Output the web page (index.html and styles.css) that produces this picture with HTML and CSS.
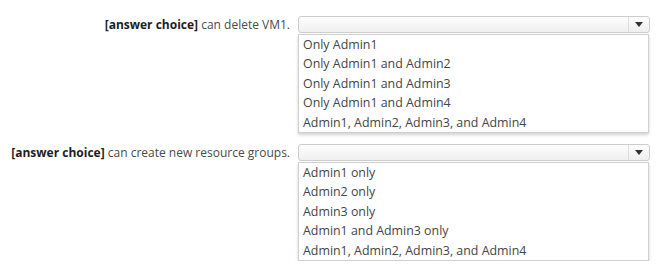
FILE: index.html
```html
<!DOCTYPE html>
<html lang="en">
<head>
    <meta charset="UTF-8">
    <title>Answer choices</title>
    <link rel="stylesheet" href="styles.css">
</head>
<body>
    <div class="sheet">
        <!-- question 1 -->
        <div class="question">
            <div class="prompt"><b>[answer choice]</b> can delete VM1.</div>
            <div class="dropdown">
                <div class="select">
                    <span class="value"></span>
                    <span class="caret"></span>
                </div>
                <ul class="options">
                    <li>Only Admin1</li>
                    <li>Only Admin1 and Admin2</li>
                    <li>Only Admin1 and Admin3</li>
                    <li>Only Admin1 and Admin4</li>
                    <li>Admin1, Admin2, Admin3, and Admin4</li>
                </ul>
            </div>
        </div>

        <!-- question 2 -->
        <div class="question">
            <div class="prompt"><b>[answer choice]</b> can create new resource groups.</div>
            <div class="dropdown">
                <div class="select">
                    <span class="value"></span>
                    <span class="caret"></span>
                </div>
                <ul class="options">
                    <li>Admin1 only</li>
                    <li>Admin2 only</li>
                    <li>Admin3 only</li>
                    <li>Admin1 and Admin3 only</li>
                    <li>Admin1, Admin2, Admin3, and Admin4</li>
                </ul>
            </div>
        </div>
    </div>
</body>
</html>
```

FILE: styles.css
```css
body {
    margin: 8px;
    background: #fff;
    font-family: "Open Sans", "Noto Sans", sans-serif;
    color: #444;
}

.sheet {
    padding-top: 8px;
    display: flex;
    flex-direction: column;
    gap: 11px;
}

.question {
    display: grid;
    grid-template-columns: 282px 352px;
    column-gap: 8px;
    align-items: start;
}

.prompt {
    text-align: right;
    font-size: 12px;
    line-height: 17px;
    color: #4a4a4a;
    white-space: nowrap;
}

.prompt b {
    color: #1e1e1e;
}

.select {
    height: 15px;
    display: flex;
    border: 1px solid #cdcdcd;
    border-radius: 3px;
    background: linear-gradient(#fdfdfd, #efefef);
}

.value {
    flex: 1;
}

.caret {
    width: 20px;
    border-left: 1px solid #dcdcdc;
    display: flex;
    align-items: center;
    justify-content: center;
}

.caret::after {
    content: "";
    border-left: 4px solid transparent;
    border-right: 4px solid transparent;
    border-top: 5px solid #333;
}

.options {
    list-style: none;
    margin: 1px 1px 0 0;
    padding: 0 0 0 4px;
    border: 1px solid #d0d0d0;
    background: #fff;
    box-shadow: 0 2px 3px rgba(0,0,0,0.18);
    font-size: 12.4px;
    line-height: 19.4px;
    color: #454545;
}
```
